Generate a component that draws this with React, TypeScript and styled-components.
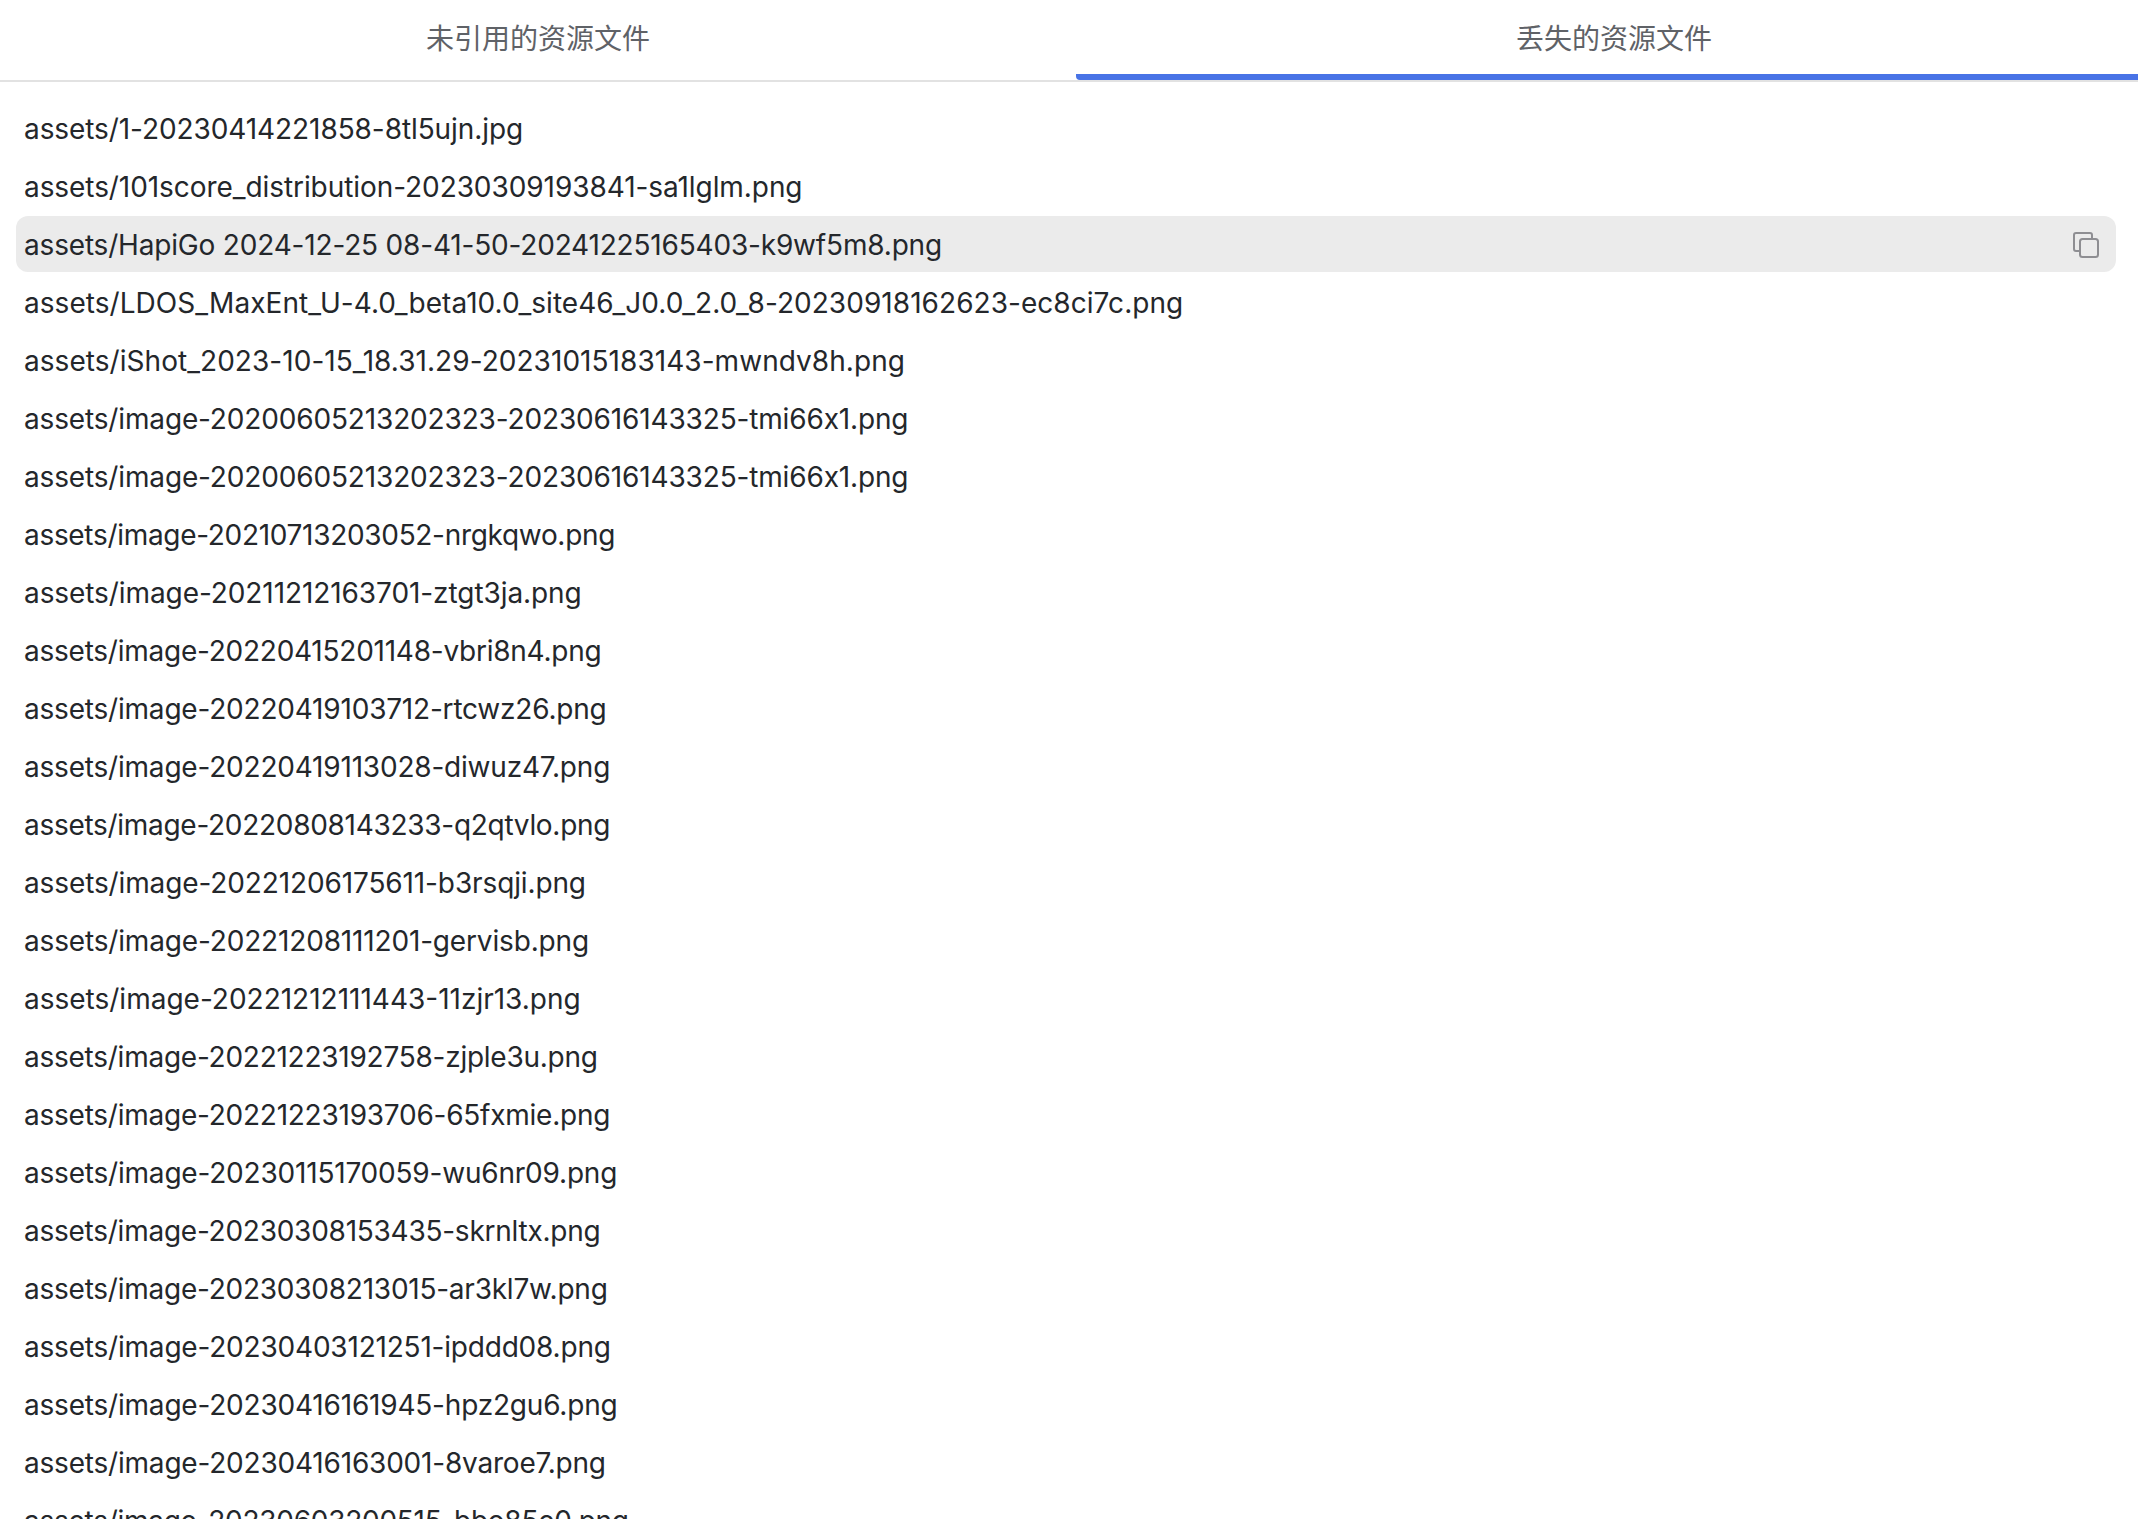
import * as React from 'react';
import styled, { createGlobalStyle } from 'styled-components';

// second value: tracking in px, Inter runs a bit off the original font's widths
const files: [string, number][] = [
  ['assets/1-20230414221858-8tl5ujn.jpg', -0.08],
  ['assets/101score_distribution-20230309193841-sa1lglm.png', -0.07],
  ['assets/HapiGo 2024-12-25 08-41-50-20241225165403-k9wf5m8.png', -0.18],
  ['assets/LDOS_MaxEnt_U-4.0_beta10.0_site46_J0.0_2.0_8-20230918162623-ec8ci7c.png', 0.05],
  ['assets/iShot_2023-10-15_18.31.29-20231015183143-mwndv8h.png', 0.05],
  ['assets/image-20200605213202323-20230616143325-tmi66x1.png', -0.15],
  ['assets/image-20200605213202323-20230616143325-tmi66x1.png', -0.15],
  ['assets/image-20210713203052-nrgkqwo.png', -0.31],
  ['assets/image-20211212163701-ztgt3ja.png', -0.08],
  ['assets/image-20220415201148-vbri8n4.png', -0.24],
  ['assets/image-20220419103712-rtcwz26.png', -0.2],
  ['assets/image-20220419113028-diwuz47.png', -0.2],
  ['assets/image-20220808143233-q2qtvlo.png', -0.29],
  ['assets/image-20221206175611-b3rsqji.png', -0.12],
  ['assets/image-20221208111201-gervisb.png', -0.16],
  ['assets/image-20221212111443-11zjr13.png', 0],
  ['assets/image-20221223192758-zjple3u.png', -0.25],
  ['assets/image-20221223193706-65fxmie.png', -0.24],
  ['assets/image-20230115170059-wu6nr09.png', -0.2],
  ['assets/image-20230308153435-skrnltx.png', -0.25],
  ['assets/image-20230308213015-ar3kl7w.png', -0.24],
  ['assets/image-20230403121251-ipddd08.png', -0.2],
  ['assets/image-20230416161945-hpz2gu6.png', -0.2],
  ['assets/image-20230416163001-8varoe7.png', -0.2],
  ['assets/image-20230603200515-bbo85e0.png', -0.27],
];

const GlobalStyle = createGlobalStyle`
  html, body {
    margin: 0;
    padding: 0;
    background: #ffffff;
  }
  body {
    font-family: Inter, "Noto Sans CJK SC", sans-serif;
  }
`;

const Page = styled.div`
  width: 2138px;
  height: 1528px;
  overflow: hidden;
  background: #ffffff;
`;

const TabBar = styled.div`
  display: flex;
  height: 82px;
  box-sizing: border-box;
  border-bottom: 2px solid #e2e2e2;
`;

const Tab = styled.div<{ $active?: boolean }>`
  flex: 0 0 1076px;
  height: 80px;
  box-sizing: border-box;
  display: flex;
  align-items: center;
  justify-content: center;
  font-family: "Noto Sans CJK SC", sans-serif;
  font-size: 28px;
  color: #5f6267;
  border-bottom: 6px solid ${({ $active }) => ($active ? '#4873e6' : 'transparent')};
  border-bottom-left-radius: ${({ $active }) => ($active ? '4px' : '0')};
`;

const List = styled.div`
  height: 1437px;
  box-sizing: border-box;
  padding: 18px 22px 0 16px;
  overflow: hidden;
  display: flex;
  flex-direction: column;
  gap: 2px;
`;

const Row = styled.div<{ $hover?: boolean }>`
  flex: 0 0 56px;
  box-sizing: border-box;
  padding: 1px 17px 0 8px;
  display: flex;
  align-items: center;
  justify-content: space-between;
  border-radius: 12px;
  background: ${({ $hover }) => ($hover ? '#ebebeb' : 'transparent')};
`;

const FileName = styled.span<{ $tracking: number }>`
  font-size: 28px;
  letter-spacing: ${({ $tracking }) => $tracking}px;
  color: #24272b;
  white-space: pre;
`;

const CopyIcon = styled.svg`
  width: 26px;
  height: 26px;
  flex-shrink: 0;
  fill: none;
  stroke: #8e8e92;
  stroke-width: 2;
`;

const App: React.FC = () => {
  return (
    <Page>
      <GlobalStyle />
      <TabBar>
        <Tab>未引用的资源文件</Tab>
        <Tab $active>丢失的资源文件</Tab>
      </TabBar>
      <List>
        {files.map(([name, tracking], i) => (
          <Row key={i} $hover={i === 2}>
            <FileName $tracking={tracking}>{name}</FileName>
            {i === 2 && (
              <CopyIcon viewBox="0 0 26 26">
                <rect x="7" y="7" width="18" height="18" rx="2.5" />
                <path d="M6 19H3a2 2 0 0 1-2-2V3a2 2 0 0 1 2-2h14a2 2 0 0 1 2 2v3" />
              </CopyIcon>
            )}
          </Row>
        ))}
      </List>
    </Page>
  );
};

export default App;
